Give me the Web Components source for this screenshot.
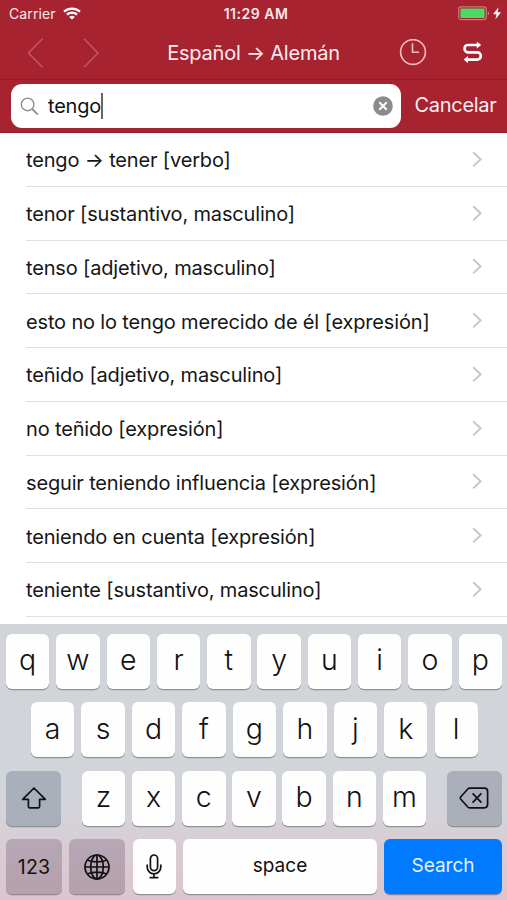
<!DOCTYPE html>
<html lang="es">
<head>
<meta charset="utf-8">
<meta name="viewport" content="width=device-width, initial-scale=1">
<title>Diccionario</title>
<style>
  body {
    margin: 0;
    width: 507px;
    height: 900px;
    overflow: hidden;
    background: #fff;
    font-family: Inter, "Liberation Sans", sans-serif;
  }
</style>
</head>
<body>
<dictionary-app></dictionary-app>

<script>
class StatusBar extends HTMLElement {
  constructor() {
    super();
    this.attachShadow({ mode: 'open' });
  }

  connectedCallback() {
    this.shadowRoot.innerHTML = `
      <style>
        :host {
          display: grid;
          grid-template-columns: 1fr auto 1fr;
          align-items: center;
          height: 27px;
          padding: 0 4px 0 9px;
          color: #fbe9ea;
          font-size: 14px;
          line-height: 27px;
        }
        .left, .right { display: flex; align-items: center; }
        .left { gap: 7px; letter-spacing: 0.1px; }
        .right { justify-content: flex-end; }
        .time { font-weight: 600; font-size: 14px; letter-spacing: 0.5px; }
        svg { display: block; }
      </style>
      <div class="left">
        <span>${this.getAttribute('carrier')}</span>
        <svg width="18" height="13" viewBox="0 0 18 13" fill="none" stroke="#fff" stroke-width="2.2">
          <path d="M1 4.6C5.4 0.5 12.6 0.5 17 4.6"/>
          <path d="M3.9 7.6C6.8 4.9 11.2 4.9 14.1 7.6"/>
          <path d="M6.2 9.9C7.8 8.4 10.2 8.4 11.8 9.9L9 12.6Z" fill="#fff" stroke="none"/>
        </svg>
      </div>
      <span class="time">${this.getAttribute('time')}</span>
      <div class="right">
        <svg width="45" height="15" viewBox="0 0 45 15">
          <rect x="0.7" y="0.9" width="27.6" height="12.8" rx="2.6" fill="none" stroke="#d0787b" stroke-width="1.2"/>
          <rect x="2.4" y="2.6" width="24.2" height="9.4" rx="1" fill="#4cd964"/>
          <path d="M29.9 5.2C31.5 5.8 31.5 8.8 29.9 9.4Z" fill="#d0787b"/>
          <path d="M40.6 1.2L35 8.3H38.6L37.3 13.4L43 6.2H39.5Z" fill="#fff"/>
        </svg>
      </div>
    `;
  }
}

class NavBar extends HTMLElement {
  constructor() {
    super();
    this.attachShadow({ mode: 'open' });
  }

  connectedCallback() {
    this.shadowRoot.innerHTML = `
      <style>
        :host {
          display: grid;
          grid-template-columns: 130px 1fr 130px;
          align-items: center;
          height: 52px;
          color: #fdeced;
          border-bottom: 1px solid #8d1d29;
        }
        .arrows { display: flex; gap: 39px; padding-left: 27px; }
        .title { text-align: center; font-size: 20px; line-height: 52px; white-space: nowrap; letter-spacing: -0.22px; }
        .tools { display: flex; align-items: center; gap: 35px; padding-left: 22px; }
        svg { display: block; }
      </style>
      <div class="arrows">
        <svg width="17" height="30" viewBox="0 0 17 30" fill="none" stroke="#c0575f" stroke-width="1.6">
          <path d="M15.5 0.8L1.5 15L15.5 29.2"/>
        </svg>
        <svg width="17" height="30" viewBox="0 0 17 30" fill="none" stroke="#c0575f" stroke-width="1.6">
          <path d="M1 0.8L15 15L1 29.2"/>
        </svg>
      </div>
      <div class="title"><slot></slot></div>
      <div class="tools">
        <svg width="28" height="28" viewBox="0 0 28 28" fill="none" stroke="#f5bfc2" stroke-width="1.6">
          <circle cx="14" cy="13" r="12.4"/>
          <path d="M13.5 4.2V13.2H20"/>
        </svg>
        <svg width="22" height="24" viewBox="0 0 22 24" fill="none" stroke="#fff" stroke-width="2.7">
          <path d="M16.5 4H5.6A3.2 3.2 0 0 0 2.6 7.6A3.4 3.4 0 0 0 6 11.3H15.2A3.6 3.6 0 0 1 18.8 15A3.6 3.6 0 0 1 15.2 18.6H5"/>
          <path d="M14.8 0.4L19.2 4L14.8 7.6ZM6 14.9L1.6 18.6L6 22.2Z" fill="#fff" stroke="none"/>
        </svg>
      </div>
    `;
  }
}

class SearchBar extends HTMLElement {
  constructor() {
    super();
    this.attachShadow({ mode: 'open' });
  }

  connectedCallback() {
    this.shadowRoot.innerHTML = `
      <style>
        :host {
          display: flex;
          align-items: flex-start;
          box-sizing: border-box;
          height: 53px;
          padding: 4px 0 0 11px;
          border-bottom: 1px solid #8f1a28;
        }
        .field {
          display: flex;
          align-items: center;
          box-sizing: border-box;
          width: 389.5px;
          height: 44px;
          padding: 0 8px 0 9px;
          border-radius: 11px;
          background: #fff;
        }
        .query {
          margin-left: 9px;
          font-size: 20px;
          line-height: 42px;
          color: #111;
          letter-spacing: -0.2px;
        }
        .caret { width: 2px; height: 26px; background: #666; }
        .clear { margin-left: auto; }
        .cancel {
          margin-left: 14px;
          font-size: 20px;
          line-height: 43px;
          letter-spacing: -0.3px;
          color: #fdeced;
        }
        svg { display: block; }
      </style>
      <div class="field">
        <svg width="19" height="19" viewBox="0 0 19 19" fill="none" stroke="#8e8e93" stroke-width="1.4">
          <circle cx="7.6" cy="7.4" r="6.3"/>
          <path d="M12.2 12L17.8 17.6" stroke-width="1.8"/>
        </svg>
        <span class="query">${this.getAttribute('value')}</span>
        <span class="caret"></span>
        <svg class="clear" width="20" height="20" viewBox="0 0 20 20">
          <circle cx="10" cy="10" r="9.8" fill="#8b8b8f"/>
          <path d="M6.3 6.3L13.7 13.7M13.7 6.3L6.3 13.7" stroke="#fff" stroke-width="2"/>
        </svg>
      </div>
      <span class="cancel"><slot></slot></span>
    `;
  }
}

class ResultRow extends HTMLElement {
  constructor() {
    super();
    this.attachShadow({ mode: 'open' });
  }

  connectedCallback() {
    this.shadowRoot.innerHTML = `
      <style>
        :host {
          display: flex;
          align-items: center;
          justify-content: space-between;
          box-sizing: border-box;
          height: 53.75px;
          margin-left: 26px;
          padding-right: 24px;
          border-bottom: 1px solid #e0e0e2;
          color: #161616;
          font-size: 20px;
          letter-spacing: -0.16px;
          white-space: nowrap;
        }
        span { padding-top: 2px; }
        svg { display: block; }
      </style>
      <span><slot></slot></span>
      <svg width="11" height="17" viewBox="0 0 11 17" fill="none" stroke="#c7c7cc" stroke-width="2">
        <path d="M1.2 1.2L8.6 8.3L1.2 15.4"/>
      </svg>
    `;
  }
}

class KeyboardKey extends HTMLElement {
  constructor() {
    super();
    this.attachShadow({ mode: 'open' });
  }

  connectedCallback() {
    this.shadowRoot.innerHTML = `
      <style>
        :host {
          display: flex;
          align-items: center;
          justify-content: center;
          box-sizing: border-box;
          flex: 0 0 43.4px;
          height: 55px;
          padding-bottom: 3px;
          border-radius: 6px;
          background: #fefefe;
          box-shadow: 0 1.3px 0 #909297;
          color: #111;
          font-size: 28.5px;
          font-weight: 350;
        }
        :host([kind]) { font-size: 19px; font-weight: 400; }
        :host([kind="shift"]), :host([kind="delete"]) { flex-basis: 55px; padding: 0; }
        :host([kind="shift"]) { background: #a9b0bc; }
        :host([kind="delete"]) { background: #abafb9; }
        :host([kind="mode"]) {
          flex-basis: 56px;
          padding: 0;
          background: linear-gradient(#b5a8b5, #b89fac);
          box-shadow: 0 1.3px 0 #98858f;
          font-size: 19.5px;
          letter-spacing: 0.2px;
        }
        :host([kind="mic"]) { padding: 0; }
        :host([kind="space"]) { flex: 1; }
        :host([kind="search"]) { flex-basis: 118px; background: #007aff; color: #e4f1ff; box-shadow: 0 1.3px 0 #8b83a0; }
      </style>
      <slot></slot>
    `;
  }
}

class SoftKeyboard extends HTMLElement {
  constructor() {
    super();
    this.attachShadow({ mode: 'open' });
  }

  letters(text) {
    return [...text].map(c => `<keyboard-key>${c}</keyboard-key>`).join('');
  }

  connectedCallback() {
    this.shadowRoot.innerHTML = `
      <style>
        :host {
          display: flex;
          flex-direction: column;
          gap: 13.5px;
          box-sizing: border-box;
          height: 276px;
          padding: 9.5px 5px 0 6px;
          background: linear-gradient(#d1d4d9 0%, #d1d4d9 50%, #d3d4da 67%, #d8ced5 78%, #dcc5ce 100%);
        }
        .row { display: flex; justify-content: space-between; }
        .row.middle { padding: 0 24px 0 25px; }
        .group { display: flex; gap: 6.8px; }
        .row.bottom { justify-content: flex-start; gap: 7.3px; }
        svg { display: block; fill: none; stroke: #111; }
      </style>
      <div class="row">${this.letters('qwertyuiop')}</div>
      <div class="row middle">${this.letters('asdfghjkl')}</div>
      <div class="row">
        <keyboard-key kind="shift">
          <svg width="26" height="24" viewBox="0 0 26 24" stroke-width="1.7" stroke-linejoin="round">
            <path d="M13 2L24.3 13.4H18.6V20.6Q18.6 21.8 17.4 21.8H8.6Q7.4 21.8 7.4 20.6V13.4H1.7Z"/>
          </svg>
        </keyboard-key>
        <div class="group">${this.letters('zxcvbnm')}</div>
        <keyboard-key kind="delete">
          <svg width="30" height="22" viewBox="0 0 30 22" stroke-width="1.7" stroke-linejoin="round">
            <path d="M10.6 1.2H25.4Q28.6 1.2 28.6 4.4V17.6Q28.6 20.8 25.4 20.8H10.6Q9.6 20.8 8.8 20L1.8 12.2Q0.8 11 1.8 9.8L8.8 2Q9.6 1.2 10.6 1.2Z"/>
            <path d="M13.6 6.4L22.4 15.6M22.4 6.4L13.6 15.6"/>
          </svg>
        </keyboard-key>
      </div>
      <div class="row bottom">
        <keyboard-key kind="mode">123</keyboard-key>
        <keyboard-key kind="mode">
          <svg width="26" height="26" viewBox="0 0 26 26" stroke-width="1.7">
            <circle cx="13" cy="13" r="12"/>
            <ellipse cx="13" cy="13" rx="6.3" ry="12"/>
            <path d="M13 1V25M1 13H25M3.6 6.3Q13 9.4 22.4 6.3M3.6 19.7Q13 16.6 22.4 19.7"/>
          </svg>
        </keyboard-key>
        <keyboard-key kind="mic">
          <svg width="16" height="25" viewBox="0 0 16 25" stroke-width="1.7">
            <rect x="4.4" y="1" width="7.2" height="15.6" rx="3.6"/>
            <path d="M1.2 10.4V13A6.8 6.8 0 0 0 14.8 13V10.4M8 19.8V23.4M3.6 23.6H12.4"/>
          </svg>
        </keyboard-key>
        <keyboard-key kind="space">space</keyboard-key>
        <keyboard-key kind="search">Search</keyboard-key>
      </div>
    `;
  }
}

class DictionaryApp extends HTMLElement {
  constructor() {
    super();
    this.attachShadow({ mode: 'open' });
  }

  connectedCallback() {
    const results = [
      'tengo → tener [verbo]',
      'tenor [sustantivo, masculino]',
      'tenso [adjetivo, masculino]',
      'esto no lo tengo merecido de él [expresión]',
      'teñido [adjetivo, masculino]',
      'no teñido [expresión]',
      'seguir teniendo influencia [expresión]',
      'teniendo en cuenta [expresión]',
      'teniente [sustantivo, masculino]'
    ];

    this.shadowRoot.innerHTML = `
      <style>
        :host {
          display: flex;
          flex-direction: column;
          width: 507px;
          height: 900px;
        }
        header { background: #a72330; }
        main { flex: 1; min-height: 0; overflow: hidden; background: #fff; }
      </style>
      <header>
        <status-bar carrier="Carrier" time="11:29 AM"></status-bar>
        <nav-bar>Español → Alemán</nav-bar>
        <search-bar value="tengo">Cancelar</search-bar>
      </header>
      <main>
        ${results.map(r => `<result-row>${r}</result-row>`).join('')}
      </main>
      <soft-keyboard></soft-keyboard>
    `;
  }
}

customElements.define('status-bar', StatusBar);
customElements.define('nav-bar', NavBar);
customElements.define('search-bar', SearchBar);
customElements.define('result-row', ResultRow);
customElements.define('keyboard-key', KeyboardKey);
customElements.define('soft-keyboard', SoftKeyboard);
customElements.define('dictionary-app', DictionaryApp);
</script>
</body>
</html>
